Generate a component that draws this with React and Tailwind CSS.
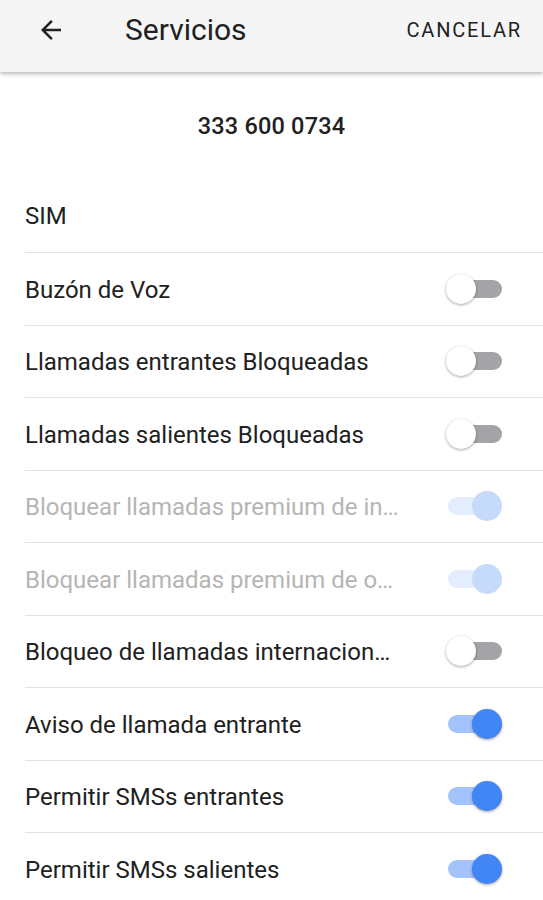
import React, { useState } from "react";

const initialServices = [
  { key: "voicemail", label: "Buzón de Voz", on: false },
  { key: "in_blocked", label: "Llamadas entrantes Bloqueadas", on: false },
  { key: "out_blocked", label: "Llamadas salientes Bloqueadas", on: false },
  { key: "premium_in", label: "Bloquear llamadas premium de información", on: true, disabled: true },
  { key: "premium_other", label: "Bloquear llamadas premium de ocio", on: true, disabled: true },
  { key: "intl_block", label: "Bloqueo de llamadas internacionales", on: false },
  { key: "call_waiting", label: "Aviso de llamada entrante", on: true },
  { key: "sms_in", label: "Permitir SMSs entrantes", on: true },
  { key: "sms_out", label: "Permitir SMSs salientes", on: true },
];

const Toggle = ({ on, disabled, onClick }) => {
  // track colour depends on state and disabled
  const track = disabled ? "bg-[#e4edfd]" : on ? "bg-[#a3c4fa]" : "bg-[#a3a3a8]";
  const thumb = disabled
    ? "bg-[#c6dafc]"
    : on
    ? "bg-[#4285f4]"
    : "bg-white";
  return (
    <button
      type="button"
      onClick={onClick}
      disabled={disabled}
      className="relative w-[57px] h-[32px] flex items-center shrink-0"
    >
      <span className={`ml-[2px] w-[54px] h-[18px] rounded-full ${track}`} />
      <span
        className={`absolute top-[1px] w-[30px] h-[30px] rounded-full ${thumb} ${
          on ? "left-[26px]" : "left-[0px]"
        } ${disabled ? "" : "shadow-[0_1px_3px_rgba(0,0,0,0.35)]"}`}
      />
    </button>
  );
};

const App = () => {
  const [services, setServices] = useState(initialServices);

  const flip = (key) =>
    setServices((prev) => prev.map((s) => (s.key === key ? { ...s, on: !s.on } : s)));

  return (
    <div className="w-[543px] h-[900px] bg-white overflow-hidden font-['Roboto',_'Liberation_Sans',_sans-serif]">
      {/* Toolbar */}
      <div className="relative z-10 h-[72px] bg-[#f5f5f5] flex items-start pt-[14px] shadow-[0_2px_4px_rgba(0,0,0,0.28)]">
        <button type="button" className="ml-[35px] w-[32px] h-[32px] flex items-center justify-center">
          <svg width="30" height="30" viewBox="0 0 24 24" fill="#222">
            <path d="M20 11H7.83l5.59-5.59L12 4l-8 8 8 8 1.41-1.41L7.83 13H20v-2z" />
          </svg>
        </button>
        <h1 className="ml-[58px] text-[30px] leading-[32px] text-[#212121]">Servicios</h1>
        <button
          type="button"
          className="ml-auto mr-[21px] h-[32px] text-[20px] tracking-[1.8px] text-[#222]"
        >
          CANCELAR
        </button>
      </div>

      {/* Phone number */}
      <div className="h-[108px] flex items-center justify-center pt-[2px]">
        <span className="text-[23.5px] font-medium text-[#212121] tracking-[0.2px]">333 600 0734</span>
      </div>

      {/* SIM */}
      <div className="pl-[25px]">
        <div className="h-[73px] flex items-center border-b border-[#e2e2e2]">
          <span className="text-[24px] text-[#212121]">SIM</span>
        </div>

        {services.map((s, i) => (
          <div
            key={s.key}
            className={`h-[72.5px] flex items-center pr-[40px] ${
              i < services.length - 1 ? "border-b border-[#e2e2e2]" : ""
            }`}
          >
            <span
              className={`w-[378px] pt-[2px] truncate text-[24px] ${
                s.disabled ? "text-[#b5b5b5]" : "text-[#212121]"
              }`}
            >
              {s.label}
            </span>
            <div className="ml-auto">
              <Toggle on={s.on} disabled={s.disabled} onClick={() => flip(s.key)} />
            </div>
          </div>
        ))}
      </div>
    </div>
  );
};

export default App;
